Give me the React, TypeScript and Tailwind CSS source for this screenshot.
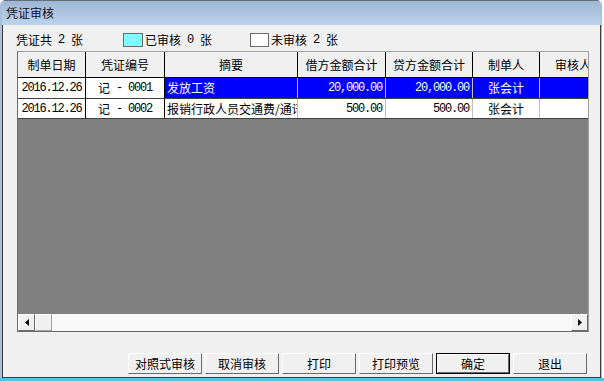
import React from "react";

const cjk = { fontFamily: '"Noto Sans CJK SC", "Noto Sans", sans-serif' };
const mono = { fontFamily: '"Liberation Mono", "Noto Sans CJK SC", monospace' };

type Row = {
  date: string;
  no: string;
  summary: string;
  debit: string;
  credit: string;
  maker: string;
  checker: string;
  selected?: boolean;
};

const rows: Row[] = [
  { date: "2016.12.26", no: "0001", summary: "发放工资", debit: "20,000.00", credit: "20,000.00", maker: "张会计", checker: "", selected: true },
  { date: "2016.12.26", no: "0002", summary: "报销行政人员交通费/通讯费", debit: "500.00", credit: "500.00", maker: "张会计", checker: "" },
];

const cols = [
  { title: "制单日期", w: "w-[68px]" },
  { title: "凭证编号", w: "w-[79px]" },
  { title: "摘要", w: "w-[133px]" },
  { title: "借方金额合计", w: "w-[88px]" },
  { title: "贷方金额合计", w: "w-[87px]" },
  { title: "制单人", w: "w-[67px]" },
  { title: "审核人", w: "w-[67px]" },
];

function Btn({ label, primary }: { label: string; primary?: boolean }) {
  return (
    <div className={`w-[74px] h-[21px] ${primary ? "border border-black" : ""}`}>
      <div className="h-full w-full border-t border-l border-white border-r border-b border-r-[#696969] border-b-[#696969] bg-[#f0f0f0] flex items-center justify-center text-[12px] text-black leading-none">
        {label}
      </div>
    </div>
  );
}

function ArrowBtn({ dir }: { dir: "left" | "right" }) {
  return (
    <div className="w-[17px] h-[17px] shrink-0 bg-[#f0f0f0] border-t border-l border-white border-r border-b border-r-[#696969] border-b-[#696969] flex items-center justify-center">
      <svg width="4" height="7" viewBox="0 0 4 7">
        {dir === "left" ? <polygon points="4,0 4,7 0,3.5" fill="#000" /> : <polygon points="0,0 0,7 4,3.5" fill="#000" />}
      </svg>
    </div>
  );
}

function Count({ label, n }: { label: string; n: number }) {
  return (
    <>
      {label}
      <span className="text-[12px] tracking-[-1.2px] whitespace-pre" style={mono}>{` ${n} `}</span>
      <span className="ml-[1px]">张</span>
    </>
  );
}

export default function App() {
  return (
    <div className="w-[604px] h-[381px] bg-white flex flex-col" style={cjk}>
      <div className="w-[602px] h-[378px] flex flex-col border-l-2 border-r border-[#a9bfd9] rounded-tl-[5px] rounded-tr-[5px] overflow-hidden">
        {/* Title bar */}
        <div className="h-[25px] shrink-0 bg-gradient-to-b from-[#9db6d3] to-[#bdd3ec] border-t border-[#5f6f80] flex items-center pl-[4px] text-[12px] text-[#111]">
          凭证审核
        </div>

        {/* Content */}
        <div className="flex-1 flex flex-col bg-[#f0f0f0] border-l border-r border-b border-[#3a3a3a]">
          {/* Summary */}
          <div className="flex items-center h-[14px] mt-[8px] pl-[13px] text-[12px] text-black leading-none">
            <span className="w-[107px] flex items-center">
              <Count label="凭证共" n={2} />
            </span>
            <span className="w-[20px] h-[14px] bg-[#80ffff] border border-[#6a6a6a]" />
            <span className="w-[107px] pl-[2px] flex items-center">
              <Count label="已审核" n={0} />
            </span>
            <span className="w-[19px] h-[14px] bg-white border border-[#6a6a6a]" />
            <span className="pl-[2px] flex items-center">
              <Count label="未审核" n={2} />
            </span>
          </div>

          {/* Grid */}
          <div className="ml-[14px] mt-[4px] w-[572px] h-[281px] border border-t-[#a0a0a0] border-l-[#6a6a6a] border-r-[#a0a0a0] border-b-[#6a6a6a] flex flex-col overflow-hidden">
            <div className="flex h-[26px] shrink-0 bg-[#f0f0f0] border-b border-black">
              {cols.map((c) => (
                <div key={c.title} className={`${c.w} shrink-0 border-r border-black flex items-center justify-center text-[12px] text-black whitespace-nowrap overflow-hidden`}>
                  {c.title}
                </div>
              ))}
            </div>
            {rows.map((r, i) => {
              const hi = r.selected ? "bg-[#0000ff] text-white" : "bg-white text-black";
              return (
                <div key={i} className={`flex ${i === 0 ? "h-[21px]" : "h-[20px]"} shrink-0 border-b border-[#404040] text-[12px]`}>
                  <div className="w-[68px] shrink-0 bg-white text-black border-r border-black flex items-center justify-center tracking-[-1.2px]" style={mono}>
                    {r.date}
                  </div>
                  <div className="w-[79px] shrink-0 bg-white text-black border-r border-black flex items-center justify-center whitespace-pre">
                    <span>记</span>
                    <span className="tracking-[-1.2px]" style={mono}>{" - " + r.no}</span>
                  </div>
                  <div className={`w-[133px] shrink-0 ${hi} border-r border-[#c0c0c0] flex items-center pl-[2px] whitespace-nowrap overflow-hidden`}>
                    {r.summary}
                  </div>
                  <div className={`w-[88px] shrink-0 ${hi} border-r border-[#c0c0c0] flex items-center justify-end pr-[3px] tracking-[-1.2px]`} style={mono}>
                    {r.debit}
                  </div>
                  <div className={`w-[87px] shrink-0 ${hi} border-r border-[#c0c0c0] flex items-center justify-end pr-[3px] tracking-[-1.2px]`} style={mono}>
                    {r.credit}
                  </div>
                  <div className={`w-[67px] shrink-0 ${hi} border-r border-[#c0c0c0] flex items-center justify-center`}>
                    {r.maker}
                  </div>
                  <div className={`w-[67px] shrink-0 ${hi} border-r border-[#c0c0c0] flex items-center justify-center`}>
                    {r.checker}
                  </div>
                </div>
              );
            })}
            <div className="flex-1 bg-[#808080]" />
            {/* Horizontal scrollbar */}
            <div className="h-[17px] shrink-0 flex bg-[#f8f8f8]">
              <ArrowBtn dir="left" />
              <div className="w-[17px] h-[17px] shrink-0 bg-[#f0f0f0] border-t border-l border-white border-r border-b border-r-[#a0a0a0] border-b-[#a0a0a0]" />
              <div className="flex-1" />
              <ArrowBtn dir="right" />
            </div>
          </div>

          {/* Buttons */}
          <div className="flex gap-[3px] pl-[125px] mt-[21px]">
            <Btn label="对照式审核" />
            <Btn label="取消审核" />
            <Btn label="打印" />
            <Btn label="打印预览" />
            <Btn label="确定" primary />
            <Btn label="退出" />
          </div>
        </div>
      </div>
      <div className="h-[3px] w-[604px] bg-[#50c4ec]" />
    </div>
  );
}
